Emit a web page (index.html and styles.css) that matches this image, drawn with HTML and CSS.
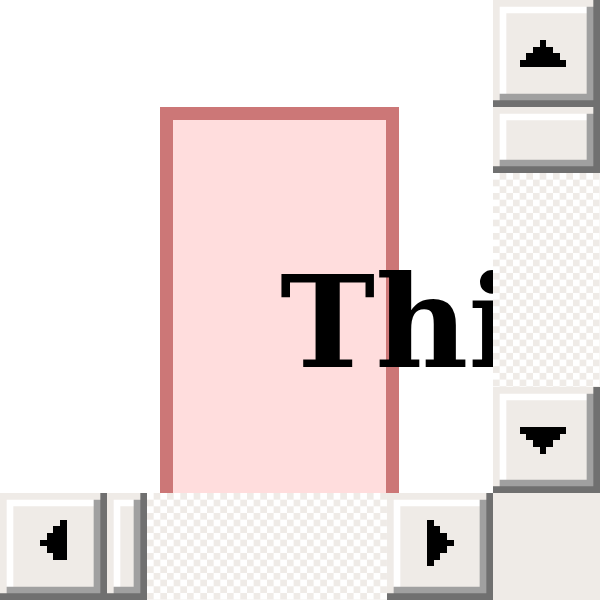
FILE: index.html
```html
<!DOCTYPE html>
<html>
<head>
<meta charset="utf-8">
<link rel="stylesheet" href="styles.css">
</head>
<body>
<div class="screen">
  <div class="content">
    <div class="box"></div>
    <div class="text">This is some text</div>
  </div>
  <div class="vbar">
    <div class="btn"><svg class="arr" viewBox="0 0 16 16"><path d="M7 6h1v1H7z M6 7h3v1H6z M5 8h5v1H5z M4 9h7v1H4z"/></svg></div>
    <div class="vthumb bevel"></div>
    <div class="track"></div>
    <div class="btn"><svg class="arr" viewBox="0 0 16 16"><path d="M4 6h7v1H4z M5 7h5v1H5z M6 8h3v1H6z M7 9h1v1H7z"/></svg></div>
  </div>
  <div class="hbar">
    <div class="btn"><svg class="arr" viewBox="0 0 16 16"><path d="M6 7h1v1H6z M7 6h1v3H7z M8 5h1v5H8z M9 4h1v6H9z"/></svg></div>
    <div class="hthumb bevel"></div>
    <div class="track"></div>
    <div class="btn"><svg class="arr" viewBox="0 0 16 16"><path d="M6 4h1v7H6z M7 5h1v5H7z M8 6h1v3H8z M9 7h1v1H9z"/></svg></div>
  </div>
  <div class="corner"></div>
</div>
</body>
</html>
```

FILE: styles.css
```css
html, body {
  margin: 0;
  padding: 0;
  background: #ffffff;
}

.screen {
  zoom: 6.666667;
  width: 90px;
  height: 90px;
  display: grid;
  grid-template-columns: 74px 16px;
  grid-template-rows: 74px 16px;
  overflow: hidden;
}

.content {
  grid-column: 1;
  grid-row: 1;
  display: grid;
  justify-items: start;
  align-items: start;
  overflow: hidden;
  background: #ffffff;
  min-width: 0;
  min-height: 0;
}

.box {
  grid-area: 1 / 1;
  margin: 16px 0 0 24px;
  width: 32px;
  height: 80px;
  border: 2px solid #cc7777;
  background: #ffdddd;
}

.text {
  grid-area: 1 / 1;
  margin: 38.76px 0 0 42px;
  font-family: "DejaVu Serif", serif;
  font-weight: bold;
  font-size: 19.2px;
  line-height: 19.2px;
  color: #000000;
  white-space: nowrap;
}

.vbar {
  grid-column: 2;
  grid-row: 1;
  display: flex;
  flex-direction: column;
}

.hbar {
  grid-column: 1;
  grid-row: 2;
  display: flex;
  flex-direction: row;
}

.corner {
  grid-column: 2;
  grid-row: 2;
  background: #efebe7;
}

.btn,
.bevel {
  background: #efebe7;
  box-shadow:
    inset -1px -1px 0 0 #707070,
    inset 1px 1px 0 0 #efebe7,
    inset -2px -2px 0 0 #a0a0a0,
    inset 2px 2px 0 0 #ffffff;
  flex: none;
}

.btn {
  width: 16px;
  height: 16px;
}

.arr {
  display: block;
  width: 16px;
  height: 16px;
  shape-rendering: crispEdges;
  fill: #000000;
}

.vthumb {
  width: 16px;
  height: 10px;
}

.hthumb {
  width: 6px;
  height: 16px;
}

.track {
  flex: 1;
  background: repeating-conic-gradient(#efebe7 0 25%, #ffffff 0 50%) 0 0 / 2px 2px;
}
```
